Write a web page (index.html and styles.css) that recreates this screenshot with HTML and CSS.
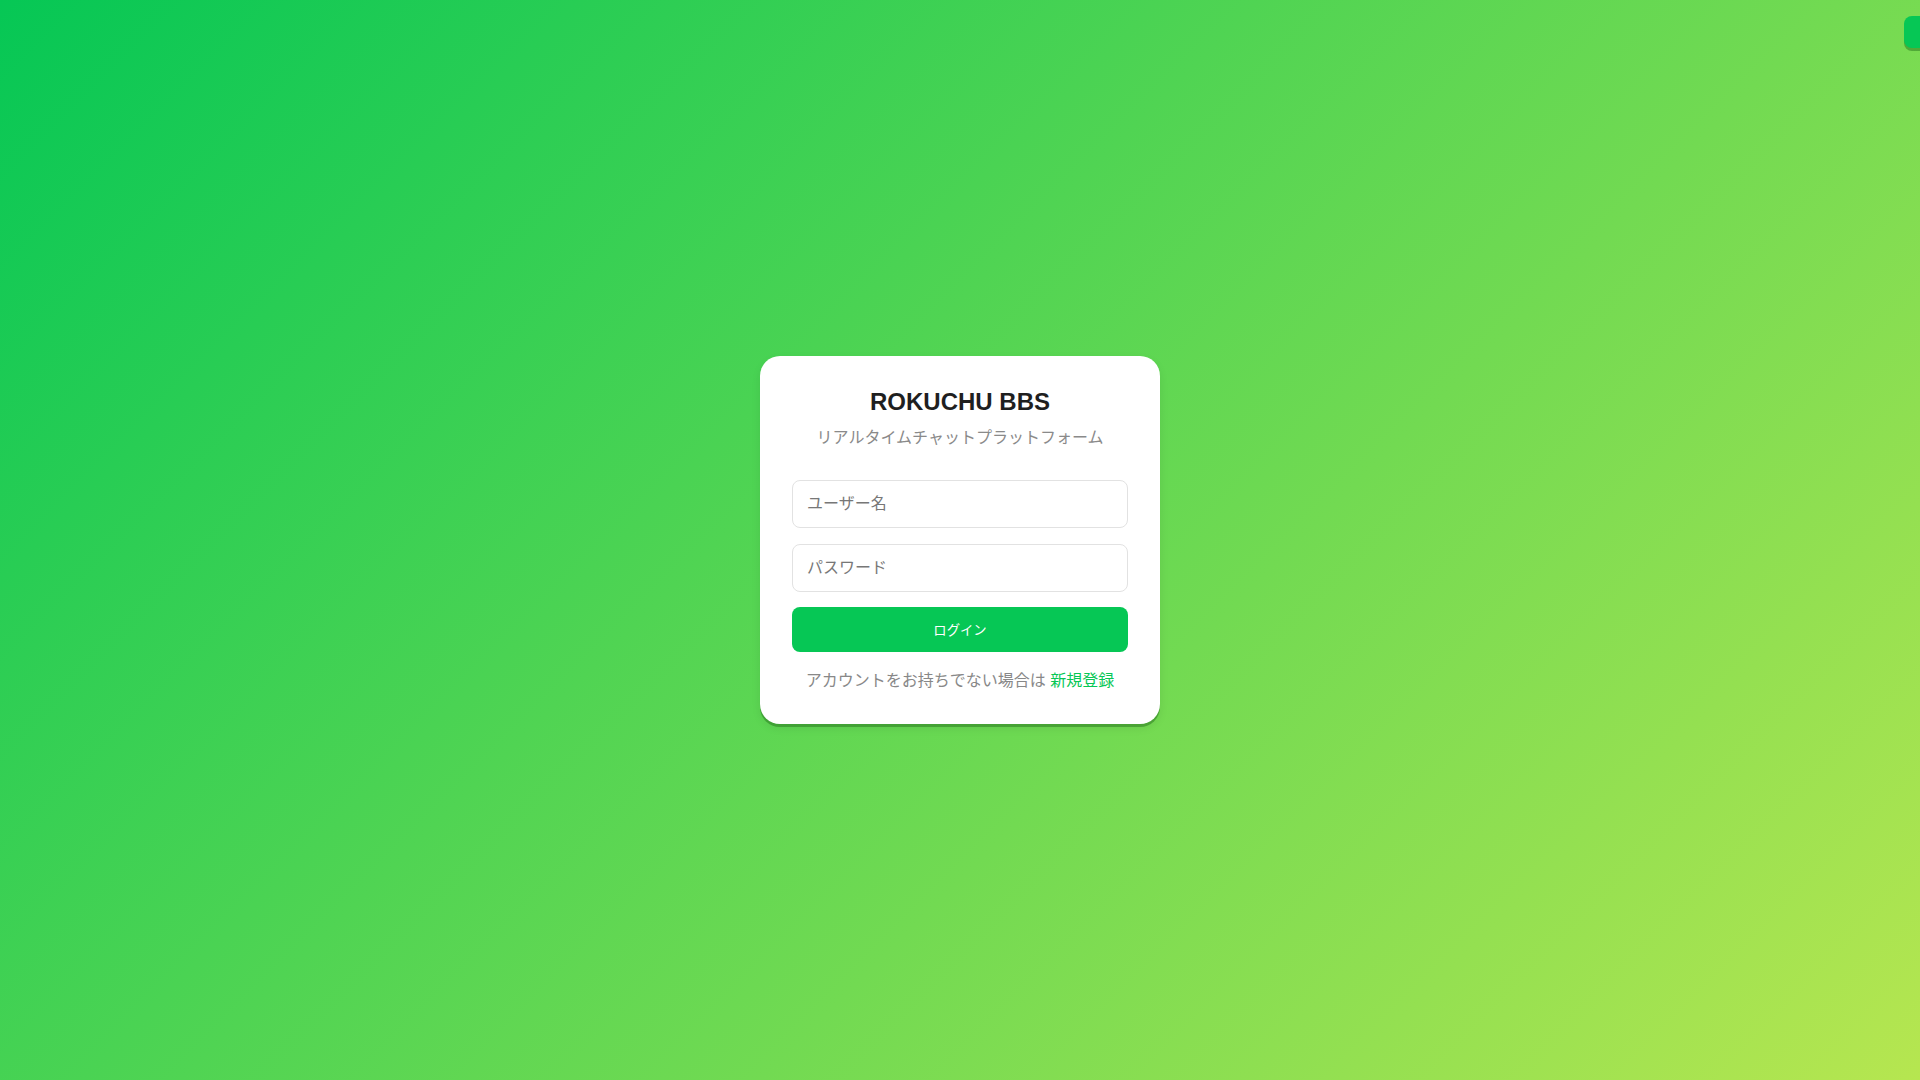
FILE: index.html
```html
<!DOCTYPE html>
<html lang="ja">
<head>
<meta charset="utf-8">
<title>ROKUCHU BBS</title>
<link rel="stylesheet" href="styles.css">
</head>
<body>
<button class="corner-btn" type="button" aria-label="menu"></button>
<main class="page">
  <div class="card">
    <h1 class="title">ROKUCHU BBS</h1>
    <p class="subtitle">リアルタイムチャットプラットフォーム</p>
    <form class="form">
      <input class="field" type="text" placeholder="ユーザー名">
      <input class="field" type="password" placeholder="パスワード">
      <button class="login" type="button">ログイン</button>
    </form>
    <p class="signup">アカウントをお持ちでない場合は <a class="signup-link" href="#">新規登録</a></p>
  </div>
</main>
</body>
</html>
```

FILE: styles.css
```css
* { box-sizing: border-box; }
html, body { margin: 0; padding: 0; }
body {
  width: 1920px;
  height: 1080px;
  overflow: hidden;
  font-family: "Liberation Sans", "Noto Sans CJK JP", sans-serif;
  background: linear-gradient(135deg, #06c755 0%, #b6e650 100%);
}
.page {
  height: 1080px;
  display: flex;
  align-items: center;
  justify-content: center;
}
.card {
  width: 400px;
  background: #fff;
  border-radius: 20px;
  padding: 32px 32px 31px;
  box-shadow: 0 3px 0 rgba(40, 120, 30, 0.5), 0 4px 10px rgba(0, 0, 0, 0.08);
  text-align: center;
}
.title {
  margin: 0 0 10px;
  font-size: 24px;
  line-height: 28px;
  font-weight: 700;
  color: #1f1f1f;
}
.subtitle {
  margin: 0 0 30px;
  font-size: 16px;
  line-height: 24px;
  color: #8a8a8a;
}
.form {
  display: flex;
  flex-direction: column;
  gap: 16px;
}
.field {
  height: 48px;
  border: 1px solid #e2e2e2;
  border-radius: 8px;
  padding: 0 14px;
  font-family: inherit;
  font-size: 16px;
  color: #333;
  background: #fff;
  outline: none;
}
.field::placeholder { color: #777; }
.login {
  height: 45px;
  margin-top: -1px;
  border: none;
  border-radius: 8px;
  background: #06c755;
  color: #fff;
  font-family: inherit;
  font-size: 13.333px;
  cursor: pointer;
}
.signup {
  margin: 17px 0 0;
  font-size: 16px;
  line-height: 24px;
  color: #888;
}
.signup-link {
  color: #06c755;
  text-decoration: none;
}
.corner-btn {
  position: fixed;
  top: 16px;
  left: 1904px;
  width: 48px;
  height: 32px;
  border: none;
  border-radius: 8px;
  background: #06c755;
  box-shadow: 0 3px 0 rgba(40, 120, 30, 0.5);
  padding: 0;
}
```
